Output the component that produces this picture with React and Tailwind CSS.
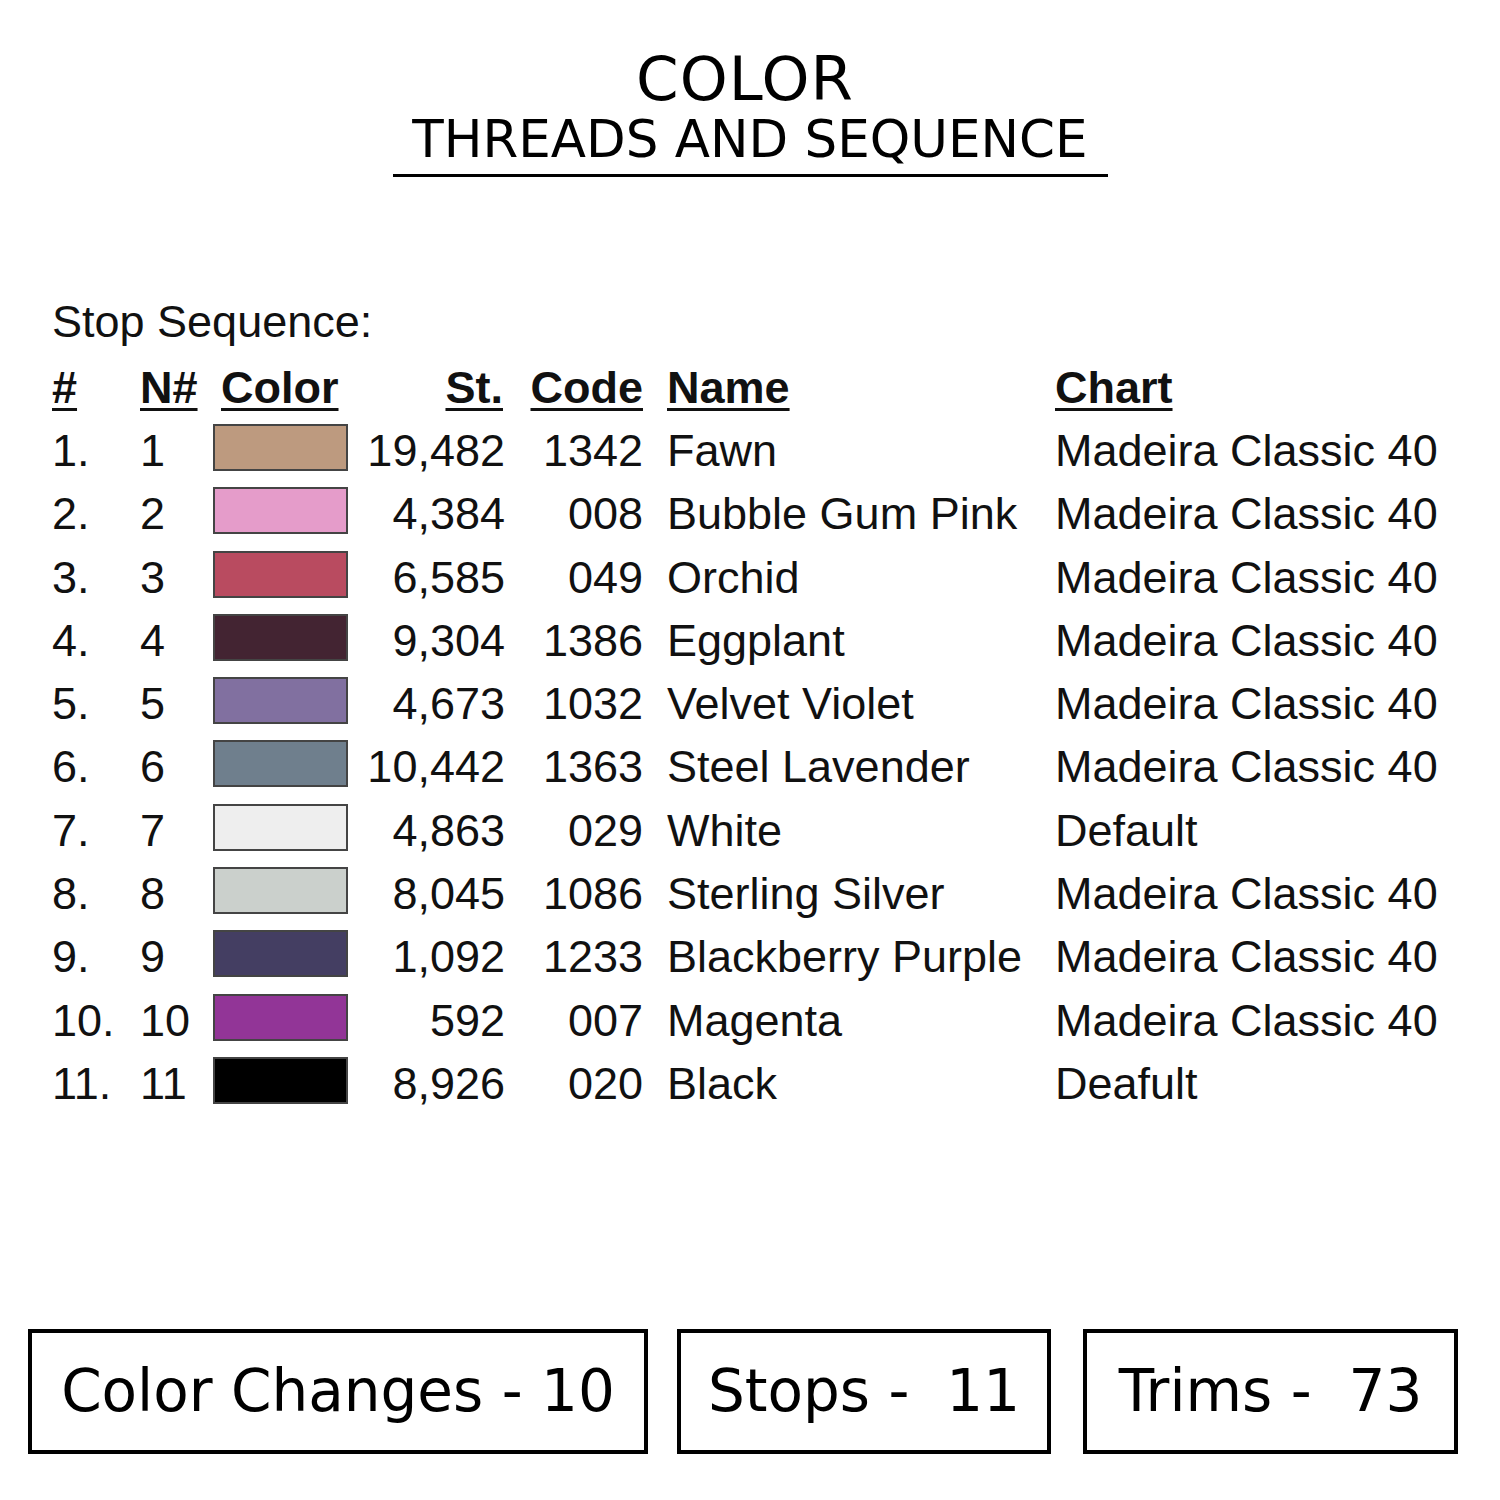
import React from "react";

const rows = [
  ["1.", "1", "#bd9a7f", "19,482", "1342", "Fawn", "Madeira Classic 40"],
  ["2.", "2", "#e59cca", "4,384", "008", "Bubble Gum Pink", "Madeira Classic 40"],
  ["3.", "3", "#b94b60", "6,585", "049", "Orchid", "Madeira Classic 40"],
  ["4.", "4", "#432432", "9,304", "1386", "Eggplant", "Madeira Classic 40"],
  ["5.", "5", "#8170a0", "4,673", "1032", "Velvet Violet", "Madeira Classic 40"],
  ["6.", "6", "#6f7f8d", "10,442", "1363", "Steel Lavender", "Madeira Classic 40"],
  ["7.", "7", "#eeeeee", "4,863", "029", "White", "Default"],
  ["8.", "8", "#cbd0cc", "8,045", "1086", "Sterling Silver", "Madeira Classic 40"],
  ["9.", "9", "#443e62", "1,092", "1233", "Blackberry Purple", "Madeira Classic 40"],
  ["10.", "10", "#923597", "592", "007", "Magenta", "Madeira Classic 40"],
  ["11.", "11", "#000000", "8,926", "020", "Black", "Deafult"],
];

const grid =
  "grid grid-cols-[88px_73px_135px_157px_138px_414px_1fr] auto-rows-[63.3px] items-center";

export default function App() {
  return (
    <div className="w-[1500px] h-[1500px] bg-white text-black relative overflow-hidden">
      {/* Title */}
      <div className="flex flex-col items-center pt-[48px] font-['DejaVu_Sans',sans-serif]">
        <div className="text-[61px] leading-[61px] tracking-[1px] pr-[10px]">COLOR</div>
        <div className="mt-[5px] text-[51.5px] leading-[51.5px] font-normal">
          THREADS AND SEQUENCE
        </div>
        <div className="mt-[8px] w-[715px] h-[3px] bg-black"></div>
      </div>

      {/* Table */}
      <div className="pl-[52px] mt-[113px] font-['Liberation_Sans',Arial,sans-serif] text-[45px] text-[#111]">
        <div className="h-[63px] leading-[63px]">Stop Sequence:</div>
        <div className={grid + " mt-[3px] leading-[63px]"}>
          <div className="font-bold underline decoration-[3px] underline-offset-[5px]">#</div>
          <div className="font-bold underline decoration-[3px] underline-offset-[5px]">N#</div>
          <div className="font-bold underline decoration-[3px] underline-offset-[5px] pl-[8px]">Color</div>
          <div className="text-right pr-[2px]">
            <span className="font-bold underline decoration-[3px] underline-offset-[5px]">St.</span>
          </div>
          <div className="text-right">
            <span className="font-bold underline decoration-[3px] underline-offset-[5px]">Code</span>
          </div>
          <div className="pl-[24px]">
            <span className="font-bold underline decoration-[3px] underline-offset-[5px]">Name</span>
          </div>
          <div className="-ml-[2px]">
            <span className="font-bold underline decoration-[3px] underline-offset-[5px]">Chart</span>
          </div>
          {rows.map((r) => (
            <React.Fragment key={r[0]}>
              <div>{r[0]}</div>
              <div>{r[1]}</div>
              <div className="flex items-center h-full pb-[6px]">
                <div
                  className="w-[135px] h-[47px] border-2 border-[#444]"
                  style={{ backgroundColor: r[2] }}
                ></div>
              </div>
              <div className="text-right">{r[3]}</div>
              <div className="text-right">{r[4]}</div>
              <div className="pl-[24px] whitespace-nowrap">{r[5]}</div>
              <div className="whitespace-nowrap -ml-[2px]">{r[6]}</div>
            </React.Fragment>
          ))}
        </div>
      </div>

      {/* Bottom boxes */}
      <div className="absolute left-0 top-[1329px] w-full flex font-['DejaVu_Sans',sans-serif] text-[58px]">
        <div className="ml-[28px] w-[620px] h-[125px] border-4 border-black flex items-center justify-center whitespace-pre">
          Color Changes - 10
        </div>
        <div className="ml-[29px] w-[374px] h-[125px] border-4 border-black flex items-center justify-center whitespace-pre">
          {"Stops -  11"}
        </div>
        <div className="ml-[32px] w-[375px] h-[125px] border-4 border-black flex items-center justify-center whitespace-pre">
          {"Trims -  73"}
        </div>
      </div>
    </div>
  );
}
